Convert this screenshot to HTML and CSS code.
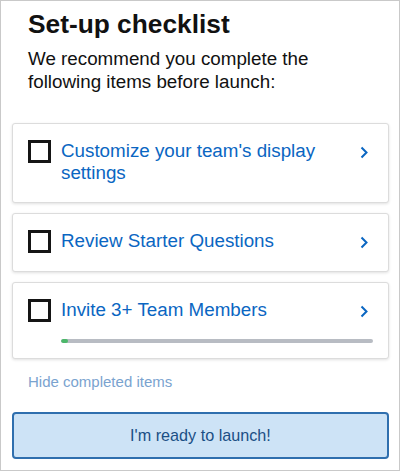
FILE: index.html
```html
<!DOCTYPE html>
<html lang="en">
<head>
<meta charset="utf-8">
<title>Set-up checklist</title>
<link rel="stylesheet" href="styles.css">
</head>
<body>
<div class="page">
  <h1 class="title">Set-up checklist</h1>
  <p class="intro">We recommend you complete the following items before launch:</p>

  <ul class="checklist">
    <li class="card">
      <div class="card-row">
        <span class="box"></span>
        <span class="label">Customize your team's display settings</span>
        <svg class="chev" width="8" height="13" viewBox="0 0 8 13"><path d="M1.5 1.5 L6.5 6.5 L1.5 11.5" fill="none" stroke="#0a66c2" stroke-width="2"/></svg>
      </div>
    </li>
    <li class="card">
      <div class="card-row">
        <span class="box"></span>
        <span class="label">Review Starter Questions</span>
        <svg class="chev" width="8" height="13" viewBox="0 0 8 13"><path d="M1.5 1.5 L6.5 6.5 L1.5 11.5" fill="none" stroke="#0a66c2" stroke-width="2"/></svg>
      </div>
    </li>
    <li class="card card-progress">
      <div class="card-row">
        <span class="box"></span>
        <span class="label">Invite 3+ Team Members</span>
        <svg class="chev" width="8" height="13" viewBox="0 0 8 13"><path d="M1.5 1.5 L6.5 6.5 L1.5 11.5" fill="none" stroke="#0a66c2" stroke-width="2"/></svg>
      </div>
      <div class="progress"><div class="progress-fill" style="width:2.4%"></div></div>
    </li>
  </ul>

  <a class="hide-link">Hide completed items</a>

  <button class="launch">I'm ready to launch!</button>
</div>
</body>
</html>
```
FILE: styles.css
```css
* { box-sizing: border-box; }
html, body { margin: 0; padding: 0; }
body {
  width: 400px;
  height: 471px;
  border: 1px solid #c9c9c9;
  background: #fff;
  font-family: "Liberation Sans", Arial, sans-serif;
  overflow: hidden;
}
.page {
  padding: 0 10px 0 11px;
  display: flex;
  flex-direction: column;
}
.title {
  margin: 8px 0 0 16px;
  font-size: 26.3px;
  line-height: 30px;
  font-weight: bold;
  color: #111;
}
.intro {
  margin: 8px 0 0 16px;
  font-size: 18.8px;
  line-height: 23px;
  color: #111;
  width: 320px;
}
.checklist {
  list-style: none;
  margin: 30px 0 0;
  padding: 0;
  display: flex;
  flex-direction: column;
  gap: 10px;
}
.card {
  background: #fff;
  border: 1px solid #dcdcdc;
  border-radius: 3px;
  box-shadow: 0 1px 3px rgba(0,0,0,0.12);
  padding: 16px 15px 18px 15px;
}
.card-progress { padding-bottom: 15px; }
.card-row {
  display: flex;
  align-items: flex-start;
}
.box {
  flex: none;
  width: 23px;
  height: 23px;
  border: 3px solid #151515;
  margin-right: 10px;
}
.label {
  flex: 1;
  font-size: 18.8px;
  line-height: 22px;
  color: #0a66c2;
  padding-right: 20px;
}
.chev {
  flex: none;
  margin: 6px 5px 0 0;
}
.progress {
  margin: 17px 0 0 33px;
  height: 4px;
  border-radius: 2px;
  background: #b8bcc3;
  overflow: hidden;
}
.progress-fill {
  height: 100%;
  background: #4cb86a;
  border-radius: 2px;
}
.hide-link {
  margin: 13px 0 0 16px;
  font-size: 15px;
  line-height: 20px;
  color: #7aa3cf;
}
.launch {
  margin-top: 20px;
  height: 47px;
  width: 100%;
  background: #cde3f6;
  border: 2px solid #2f6fae;
  border-radius: 4px;
  font-family: "Liberation Sans", Arial, sans-serif;
  font-size: 16.2px;
  color: #1b4f85;
}
```
